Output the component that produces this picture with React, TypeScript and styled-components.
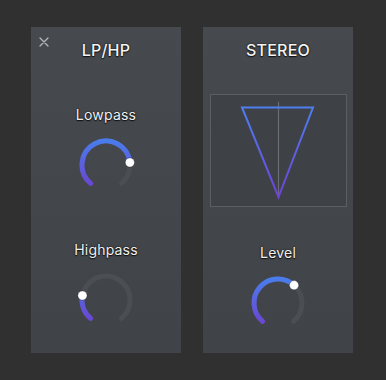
import React from 'react';
import styled, { createGlobalStyle } from 'styled-components';

const GlobalStyle = createGlobalStyle`
  html, body {
    margin: 0;
    padding: 0;
    background: #303030;
  }
  body {
    font-family: Inter, 'Noto Sans', sans-serif;
  }
`;

const Page = styled.div`
  display: flex;
  gap: 22px;
  padding: 27px 0 0 31px;
  width: 386px;
  height: 380px;
  box-sizing: border-box;
`;

const Panel = styled.section`
  position: relative;
  width: 150px;
  height: 326px;
  display: flex;
  flex-direction: column;
  align-items: center;
  padding-top: 13px;
  box-sizing: border-box;
  background: linear-gradient(180deg, #46494e 0%, #404347 100%);
`;

const Title = styled.h2`
  margin: 0;
  font-size: 16px;
  line-height: 20px;
  font-weight: 500;
  color: #f4f4f4;
  letter-spacing: 0.2px;
  text-shadow: 0 0 2px rgba(0, 0, 0, 0.9), 0 1px 1px rgba(0, 0, 0, 0.7);
`;

const CloseButton = styled.button`
  position: absolute;
  top: 9px;
  left: 7px;
  width: 12px;
  height: 12px;
  padding: 0;
  border: none;
  background: none;
  display: flex;
  align-items: center;
  justify-content: center;
  cursor: pointer;
`;

const Control = styled.div<{ $top: number }>`
  margin-top: ${(p) => p.$top}px;
  display: flex;
  flex-direction: column;
  align-items: center;
  gap: 10px;
`;

const Label = styled.span`
  font-size: 14px;
  line-height: 20px;
  font-weight: 400;
  color: #f0f0f0;
  letter-spacing: 0.2px;
  text-shadow: 0 0 2px rgba(0, 0, 0, 0.9), 0 1px 1px rgba(0, 0, 0, 0.7);
`;

const Scope = styled.div`
  margin-top: 34px;
  width: 137px;
  height: 113px;
  box-sizing: border-box;
  border: 1px solid #5b5e63;
  background: #3e4145;
  display: flex;
`;

const START = -140;
const END = 140;
const R = 24;
const C = 30;

const pt = (deg: number) => {
  const a = (deg * Math.PI) / 180;
  return [C + R * Math.sin(a), C - R * Math.cos(a)];
};

const arc = (from: number, to: number) => {
  const [x1, y1] = pt(from);
  const [x2, y2] = pt(to);
  const large = to - from > 180 ? 1 : 0;
  return `M ${x1} ${y1} A ${R} ${R} 0 ${large} 1 ${x2} ${y2}`;
};

const Knob = ({ value, id }: { value: number; id: string }) => {
  const angle = START + (END - START) * value;
  const [dx, dy] = pt(angle);
  return (
    <svg width={60} height={60} viewBox="0 0 60 60">
      <defs>
        <linearGradient id={id} x1="0" y1="6" x2="0" y2="52" gradientUnits="userSpaceOnUse">
          <stop offset="0" stopColor="#4a7ceb" />
          <stop offset="1" stopColor="#6c44d2" />
        </linearGradient>
      </defs>
      <path d={arc(START, END)} fill="none" stroke="#4b4e53" strokeWidth={5} strokeLinecap="round" />
      <path d={arc(START, angle)} fill="none" stroke={`url(#${id})`} strokeWidth={5} strokeLinecap="round" />
      <circle cx={dx} cy={dy} r={4.6} fill="#ffffff" stroke="rgba(0,0,0,0.35)" strokeWidth={0.8} />
    </svg>
  );
};

const StereoPlot = () => (
  <svg width={135} height={111} viewBox="0 0 135 111">
    <defs>
      <linearGradient id="tri" x1="0" y1="12" x2="0" y2="103" gradientUnits="userSpaceOnUse">
        <stop offset="0" stopColor="#4d7ff0" />
        <stop offset="1" stopColor="#6f42d8" />
      </linearGradient>
    </defs>
    <line x1={67.5} y1={7} x2={67.5} y2={104} stroke="#6b6e73" strokeWidth={1.2} />
    <polygon points="31,12.5 102,12.5 67.5,102" fill="none" stroke="url(#tri)" strokeWidth={2} strokeLinejoin="miter" />
  </svg>
);

export default function App() {
  return (
    <>
      <GlobalStyle />
      <Page>
        <Panel>
          <CloseButton aria-label="Close">
            <svg width={10} height={10} viewBox="0 0 10 10">
              <path d="M1 1 L9 9 M9 1 L1 9" stroke="#b4b6ba" strokeWidth={1.3} strokeLinecap="round" />
            </svg>
          </CloseButton>
          <Title>LP/HP</Title>
          <Control $top={45}>
            <Label>Lowpass</Label>
            <Knob value={0.8} id="lp" />
          </Control>
          <Control $top={45}>
            <Label>Highpass</Label>
            <Knob value={0.217} id="hp" />
          </Control>
        </Panel>
        <Panel>
          <Title>STEREO</Title>
          <Scope>
            <StereoPlot />
          </Scope>
          <Control $top={36}>
            <Label>Level</Label>
            <Knob value={0.65} id="lvl" />
          </Control>
        </Panel>
      </Page>
    </>
  );
}
